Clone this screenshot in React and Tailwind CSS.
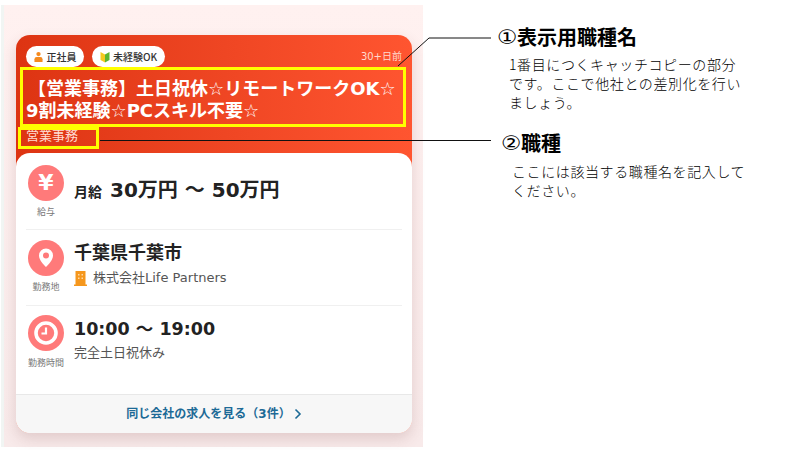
import React from "react";

const jp = "font-['DejaVu_Sans','Noto_Sans_CJK_JP',sans-serif]";

function Row({ icon, label, children, border = true, h, iconTop, labelGap }) {
  return (
    <div className={`flex gap-[10px] mx-[10px] px-[2px] ${h} ${border ? "border-b border-[#f0f0f0]" : ""}`}>
      <div className={`w-[36px] flex flex-col items-center shrink-0 ${iconTop}`}>
        <div className="w-[36px] h-[36px] rounded-full bg-[#ff7a7a] flex items-center justify-center">{icon}</div>
        <div className={`text-[9px] leading-[12px] text-[#777] whitespace-nowrap font-['Noto_Sans_CJK_JP',sans-serif] ${labelGap}`}>{label}</div>
      </div>
      <div className="flex-1 min-w-0">{children}</div>
    </div>
  );
}

function Note({ mark, title, lines, titleClass, bodyClass }) {
  return (
    <div>
      <div className={`flex items-center text-[20px] leading-[28px] font-bold text-black whitespace-nowrap font-['Noto_Sans_CJK_JP',sans-serif] ${titleClass}`}>
        <span className="w-[20px] text-[20px] font-normal font-['DejaVu_Sans',sans-serif] scale-x-[1.15] origin-left">{mark}</span>
        <span>{title}</span>
      </div>
      <div className={`text-[14px] leading-[19px] tracking-[0.6px] text-black font-['Noto_Sans_CJK_JP',sans-serif] font-light ${bodyClass}`}>
        {lines.map((l) => (
          <div key={l} className="whitespace-nowrap">{l}</div>
        ))}
      </div>
    </div>
  );
}

export default function App() {
  return (
    <div className={`relative w-[800px] h-[450px] bg-white overflow-hidden flex ${jp}`}>
      <div className="ml-[1px] mt-[5px] pl-[3px] h-[442px] bg-[#f1f5f3] shrink-0">
        <div className="w-[419px] h-[442px] bg-gradient-to-b from-[#fff1f0] to-[#f8eaea] pl-[12px] pr-[11px] pt-[30px]">
          <div className="h-[398px] rounded-[14px] overflow-hidden flex flex-col bg-gradient-to-r from-[#dd3412] to-[#ff5530] shadow-[0_6px_14px_rgba(120,60,60,0.18)]">
            <div className="h-[118px] px-[10px] pt-[11px] shrink-0">
              <div className="flex items-center gap-[8px] h-[21px]">
                <div className="h-[21px] w-[58px] justify-center rounded-full bg-white flex items-center gap-[4px] text-[10px] font-medium text-[#333] font-['Noto_Sans_CJK_JP',sans-serif]">
                  <svg width="9" height="12" viewBox="0 0 10 12"><circle cx="5" cy="2.8" r="2.4" fill="#f58a1f"/><path d="M0.5 11.5V8.5Q0.5 6 3 6H7Q9.5 6 9.5 8.5V11.5Z" fill="#f58a1f"/></svg>
                  正社員
                </div>
                <div className="h-[21px] w-[73px] justify-center rounded-full bg-white flex items-center gap-[3px] text-[10px] font-medium text-[#333] font-['Noto_Sans_CJK_JP',sans-serif]">
                  <svg width="10" height="12" viewBox="0 0 10 12"><path d="M0.5 1L5 3.5V11.5L0.5 9Z" fill="#f5c91f"/><path d="M9.5 1L5 3.5V11.5L9.5 9Z" fill="#5cb531"/></svg>
                  未経験OK
                </div>
                <div className="ml-auto text-[10px] text-[#ffd9cf]">30+日前</div>
              </div>
              <div className="mt-[11px] text-[18px] leading-[22px] font-bold text-white whitespace-nowrap">
                <div className="ml-[2px]">【営業事務】土日祝休☆リモートワークOK☆</div>
                <div>9割未経験☆PCスキル不要☆</div>
              </div>
              <div className="mt-[5px] text-[13px] leading-[18px] text-[#ffdcd2]">営業事務</div>
            </div>
            <div className="flex-1 bg-white rounded-t-[14px] flex flex-col overflow-hidden">
              <Row h="h-[77px]" iconTop="pt-[12px]" labelGap="mt-[5px]" label="給与" icon={<span className="text-white font-bold text-[22px] leading-none">¥</span>}>
                <div className="flex items-baseline gap-[8px] pt-[24px] leading-[26px] font-bold text-[#222]">
                  <span className="text-[14px]">月給</span>
                  <span className="text-[20px]">30万円 ～ 50万円</span>
                </div>
              </Row>
              <Row h="h-[76px]" iconTop="pt-[10px]" labelGap="mt-[5px]" label="勤務地" icon={
                <svg width="16" height="20" viewBox="0 0 16 20"><path fillRule="evenodd" d="M8 0.5A7 7 0 0 1 15 7.5C15 12 10.5 16.5 8 19C5.5 16.5 1 12 1 7.5A7 7 0 0 1 8 0.5ZM8 4.5A3 3 0 1 0 8 10.5A3 3 0 1 0 8 4.5Z" fill="#fff"/></svg>
              }>
                <div className="pt-[10px] text-[18px] leading-[26px] font-bold text-[#222]">千葉県千葉市</div>
                <div className="flex items-center gap-[6px] mt-[2px] text-[13px] leading-[20px] text-[#555]">
                  <svg width="13" height="15" viewBox="0 0 13 15"><path d="M1.5 0H11.5V13.5H13V15H0V13.5H1.5Z" fill="#f5971d"/><path d="M4 3H5.5V4.5H4ZM7.5 3H9V4.5H7.5ZM4 6.5H5.5V8H4ZM7.5 6.5H9V8H7.5Z" fill="#ffd9a8"/></svg>
                  株式会社Life Partners
                </div>
              </Row>
              <Row h="h-[88px]" border={false} iconTop="pt-[9px]" labelGap="mt-[6px]" label="勤務時間" icon={
                <svg width="24" height="24" viewBox="0 0 24 24"><circle cx="12" cy="12" r="10" fill="none" stroke="#fff" strokeWidth="3.6"/><path d="M12 6.5V12.5H7.5" fill="none" stroke="#fff" strokeWidth="2.2"/></svg>
              }>
                <div className="pt-[10px] text-[17.5px] leading-[26px] font-bold text-[#222]">10:00 ～ 19:00</div>
                <div className="mt-[1px] text-[13px] leading-[20px] text-[#555]">完全土日祝休み</div>
              </Row>
              <div className="mt-auto h-[39px] bg-[#f7f7f7] border-t border-[#e8e8e8] flex items-center justify-center gap-[3px] text-[12px] font-bold text-[#1d6a96]">
                同じ会社の求人を見る（3件）
                <svg width="8" height="12" viewBox="0 0 8 12"><path d="M1.5 1.5L6 6L1.5 10.5" fill="none" stroke="#1d6a96" strokeWidth="1.6"/></svg>
              </div>
            </div>
          </div>
        </div>
      </div>

      <div className="ml-[74px] pt-[23px] flex flex-col">
        <Note mark="①" title="表示用職種名" lines={["1番目につくキャッチコピーの部分", "です。ここで他社との差別化を行い", "ましょう。"]} bodyClass="ml-[12px] mt-[4px]" />
        <Note mark="②" title="職種" lines={["ここには該当する職種名を記入して", "ください。"]} titleClass="mt-[17px] ml-[4px]" bodyClass="ml-[15px] mt-[5px]" />
      </div>

      <div className="absolute left-[20px] top-[67px] w-[386px] h-[60px] border-[3px] border-[#ffff00]" />
      <div className="absolute left-[18px] top-[127px] w-[81px] h-[22px] border-[3px] border-[#ffff00]" />
      <svg className="absolute left-0 top-0 pointer-events-none" width="800" height="450">
        <path d="M398 66L429 38H491" fill="none" stroke="#111" strokeWidth="1" />
        <path d="M100 140.5H491" fill="none" stroke="#111" strokeWidth="1" />
      </svg>
    </div>
  );
}
